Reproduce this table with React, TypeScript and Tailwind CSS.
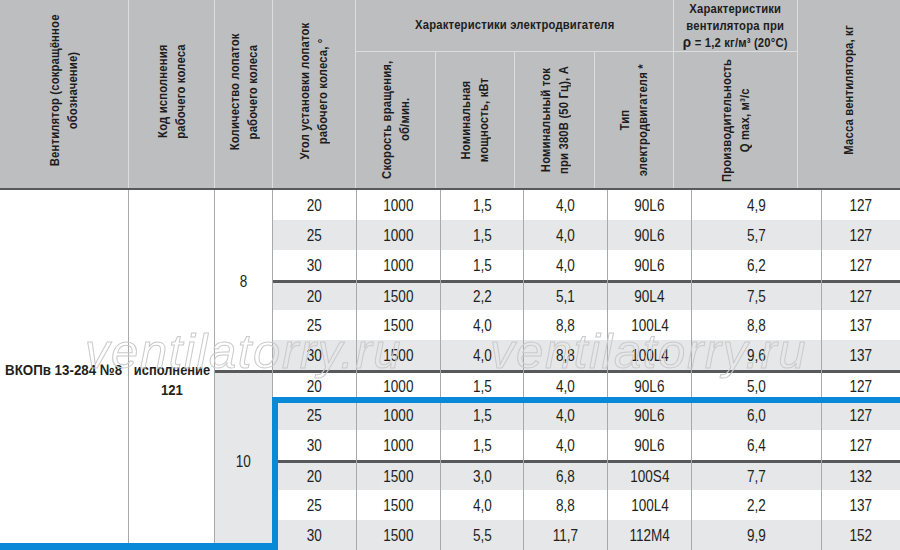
import React from "react";

const SANS = "font-['Liberation_Sans','Arial',sans-serif]";

type Row = [string, string, string, string, string, string, string];

const rows: Row[] = [
  ["20", "1000", "1,5", "4,0", "90L6", "4,9", "127"],
  ["25", "1000", "1,5", "4,0", "90L6", "5,7", "127"],
  ["30", "1000", "1,5", "4,0", "90L6", "6,2", "127"],
  ["20", "1500", "2,2", "5,1", "90L4", "7,5", "127"],
  ["25", "1500", "4,0", "8,8", "100L4", "8,8", "137"],
  ["30", "1500", "4,0", "8,8", "100L4", "9,6", "137"],
  ["20", "1000", "1,5", "4,0", "90L6", "5,0", "127"],
  ["25", "1000", "1,5", "4,0", "90L6", "6,0", "127"],
  ["30", "1000", "1,5", "4,0", "90L6", "6,4", "127"],
  ["20", "1500", "3,0", "6,8", "100S4", "7,7", "132"],
  ["25", "1500", "4,0", "8,8", "100L4", "2,2", "137"],
  ["30", "1500", "5,5", "11,7", "112M4", "9,9", "152"],
];

function VText({ lines }: { lines: React.ReactNode[] }) {
  return (
    <span className="[writing-mode:vertical-rl] rotate-180 scale-y-[0.9] text-center leading-[18px] whitespace-nowrap">
      {lines.map((l, i) => (
        <React.Fragment key={i}>
          {i > 0 && <br />}
          {l}
        </React.Fragment>
      ))}
    </span>
  );
}

function HCell({ className = "", children }: { className?: string; children: React.ReactNode }) {
  return (
    <div className={`flex items-center justify-center border-r border-[#dcdddf] ${className}`}>{children}</div>
  );
}

export default function App() {
  return (
    <div className={`relative w-[900px] h-[550px] overflow-hidden bg-white text-[#231f20] ${SANS}`}>
      {/* Header */}
      <div className="grid grid-cols-[129px_86px_58px_83px_80px_79px_80px_79px_124px_102px] grid-rows-[52px_136px] h-[188px] bg-[#bcbec0] text-[12.5px] font-bold tracking-[0.2px] text-[#1e1c1d]">
        <HCell className="row-span-2 pb-[8px]">
          <VText lines={["Вентилятор (сокращённое", "обозначение)"]} />
        </HCell>
        <HCell className="row-span-2 pb-[4px]">
          <VText lines={["Код исполнения", "рабочего колеса"]} />
        </HCell>
        <HCell className="row-span-2 pb-[4px]">
          <VText lines={["Количество лопаток", "рабочего колеса"]} />
        </HCell>
        <HCell className="row-span-2 pb-[6px]">
          <VText lines={["Угол установки лопаток", "рабочего колеса, °"]} />
        </HCell>
        <HCell className="col-span-4 border-b">
          <span className="inline-block scale-x-[0.9] whitespace-nowrap">Характеристики электродвигателя</span>
        </HCell>
        <HCell className="border-b">
          <span className="inline-block scale-x-[0.9] text-center leading-[16.5px] pt-[2px] whitespace-nowrap">
            Характеристики
            <br />
            вентилятора при
            <br />
            <span className="text-[15px]">ρ</span> = 1,2 кг/м³ (20°C)
          </span>
        </HCell>
        <div className="row-span-2 flex items-center justify-center pb-[8px]">
          <VText lines={["Масса вентилятора, кг"]} />
        </div>
        <HCell>
          <VText lines={["Скорость вращения,", "об/мин."]} />
        </HCell>
        <HCell>
          <VText lines={["Номинальная", "мощность, кВт"]} />
        </HCell>
        <HCell>
          <VText lines={["Номинальный ток", "при 380В (50 Гц), А"]} />
        </HCell>
        <HCell>
          <VText lines={["Тип", "электродвигателя    *"]} />
        </HCell>
        <HCell>
          <VText lines={["Производительность", "Q max, м³/с"]} />
        </HCell>
      </div>
      <div className="h-[2px] bg-[#58595b]" />

      {/* Body */}
      <div className="grid grid-cols-[129px_86px_58px_84px_84px_83px_84px_84px_130px_78px] grid-rows-[repeat(12,30px)] text-[16.5px]">
        <div className="row-span-12 border-r border-[#a7a9ac] pt-[170px] pl-[5px] text-[15.5px] font-bold leading-[20px] whitespace-nowrap">
          <span className="inline-block origin-left scale-x-[0.86]">ВКОПв 13-284 №8</span>
        </div>
        <div className="row-span-12 border-r border-[#a7a9ac] pt-[170px] flex flex-col items-center text-[15.5px] font-bold leading-[20px]">
          <span className="inline-block scale-x-[0.83]">исполнение</span>
          <span className="inline-block scale-x-[0.85]">121</span>
        </div>
        <div className="row-span-6 flex items-center justify-center border-r border-[#a7a9ac] bg-white pt-[2px]">
          <span className="inline-block scale-x-[0.82]">8</span>
        </div>
        {rows.map((r, i) => {
          const gray = i % 2 === 1;
          const thick = i === 3 || i === 6 || i === 9;
          const cells = r.map((v, j) => (
            <div
              key={`${i}-${j}`}
              className={`flex items-center justify-center ${j < 6 ? "border-r border-[#a7a9ac]" : ""} ${
                gray ? "bg-[#e6e7e8]" : "bg-white"
              } ${thick ? "shadow-[inset_0_3px_0_#58595b] pt-[3px]" : ""}`}
            >
              <span className="inline-block scale-x-[0.82]">{v}</span>
            </div>
          ));
          if (i === 6) {
            return (
              <React.Fragment key={i}>
                <div className="row-span-6 flex items-center justify-center border-r border-[#a7a9ac] bg-[#e6e7e8] shadow-[inset_0_3px_0_#58595b] pt-[3px]">
                  <span className="inline-block scale-x-[0.82]">10</span>
                </div>
                {cells}
              </React.Fragment>
            );
          }
          return <React.Fragment key={i}>{cells}</React.Fragment>;
        })}
      </div>

      {/* Watermarks */}
      <span className="pointer-events-none absolute left-[85px] top-[327px] italic text-[49px] leading-none tracking-[1.6px] text-transparent [-webkit-text-stroke:1px_#cacaca] whitespace-nowrap">
        ventilatorry.ru
      </span>
      <span className="pointer-events-none absolute left-[490px] top-[327px] italic text-[49px] leading-none tracking-[1.6px] text-transparent [-webkit-text-stroke:1px_#cacaca] whitespace-nowrap">
        ventilatorry.ru
      </span>

      {/* Blue highlight outline */}
      <div className="absolute left-[272px] top-[397px] w-[628px] h-[6px] bg-[#0a89d8]" />
      <div className="absolute left-[272px] top-[397px] w-[6px] h-[153px] bg-[#0a89d8]" />
      <div className="absolute left-0 top-[543px] w-[278px] h-[7px] bg-[#0a89d8]" />
    </div>
  );
}
